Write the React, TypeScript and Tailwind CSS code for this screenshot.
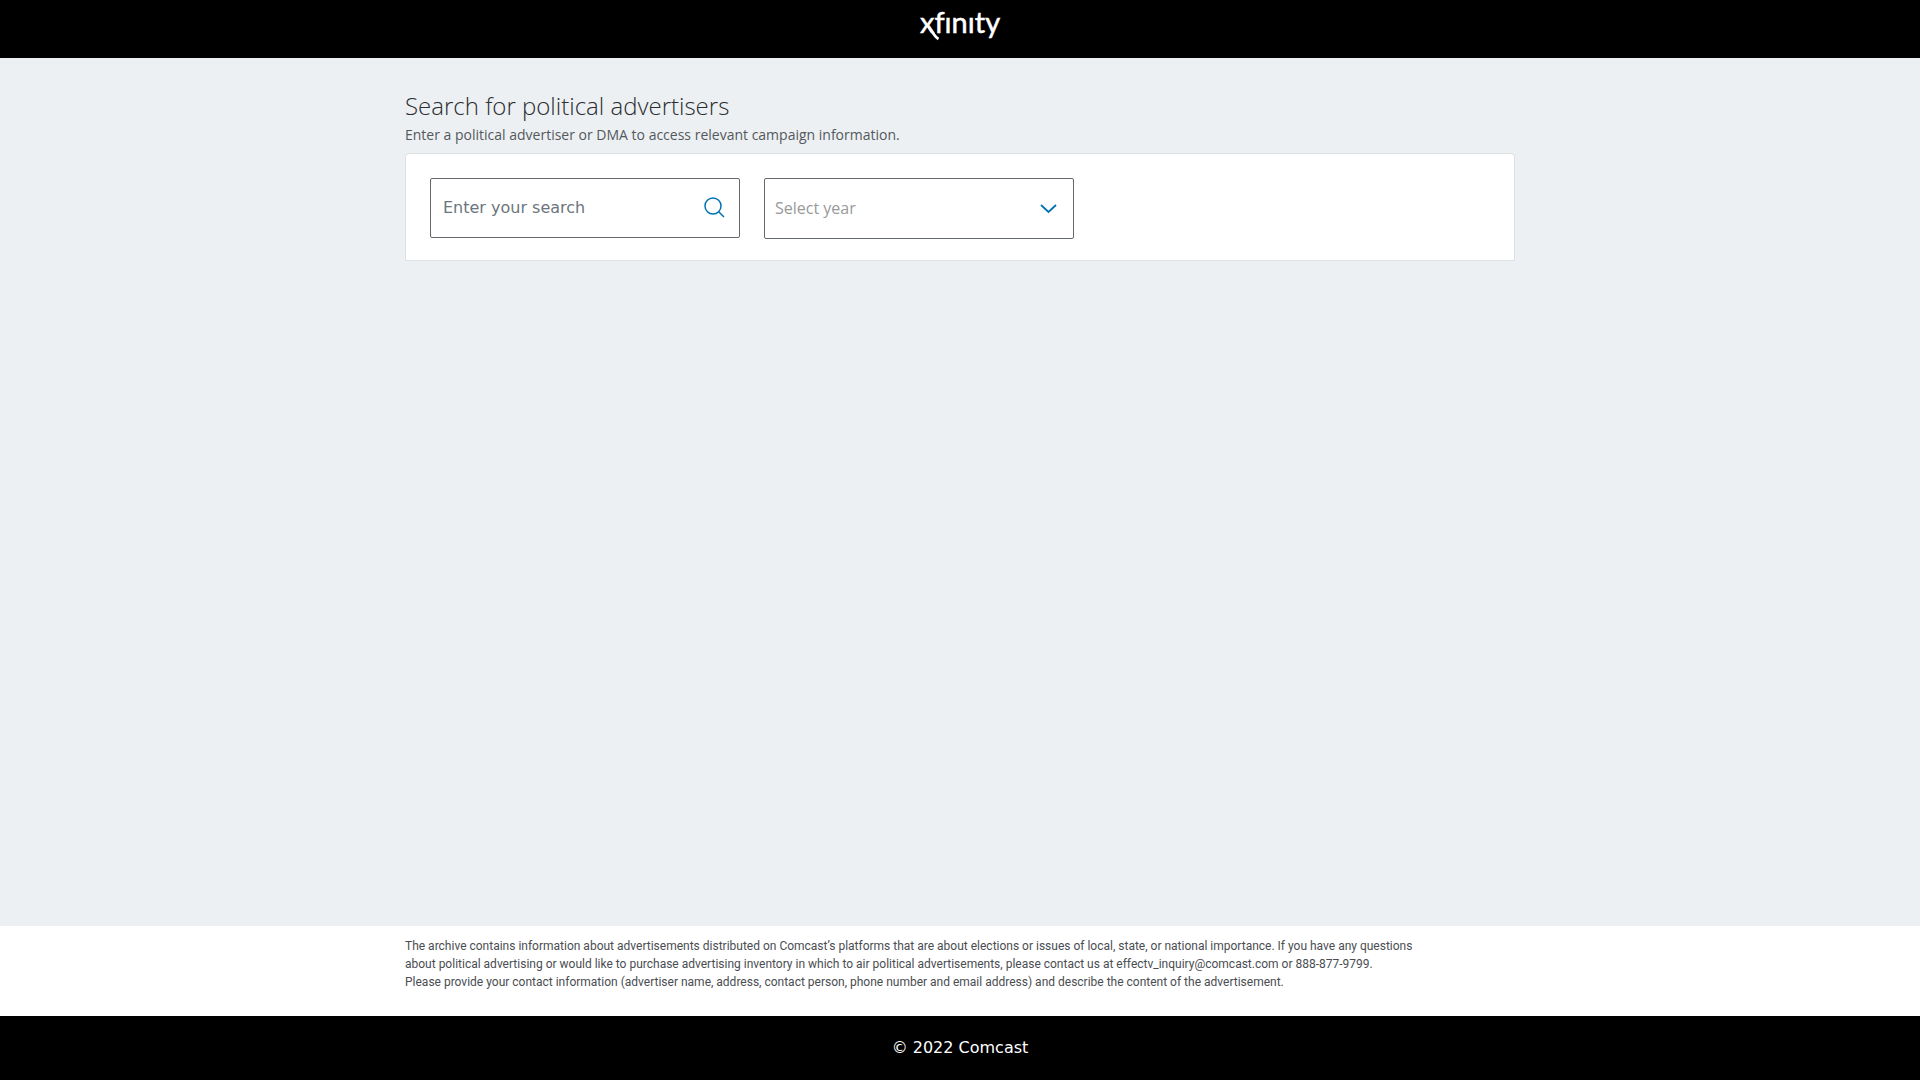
import { useState } from "react";

function Logo() {
  return (
    <svg width="84" height="40" viewBox="0 0 84 40" role="img" aria-label="xfinity">
      <text
        x="2"
        y="29"
        fill="#fff"
        stroke="#fff"
        strokeWidth="0.5"
        fontSize="29"
        fontFamily="Lato, sans-serif"
        className="[font-variant-ligatures:none]"
      >
        xfınıty
      </text>
      <path d="M10.5 22.5 L16 30.5 Q18.2 33.8 20.5 35" stroke="#fff" strokeWidth="2.8" fill="none" />
    </svg>
  );
}

function SearchIcon() {
  return (
    <svg width="24" height="24" viewBox="0 0 24 24" fill="none" stroke="#0272b6" strokeWidth="1.5" aria-hidden="true">
      <circle cx="10" cy="10" r="8" />
      <path d="M15.5 15.5 L21 21" />
    </svg>
  );
}

function ChevronIcon() {
  return (
    <svg width="18" height="12" viewBox="0 0 18 12" fill="none" stroke="#0272b6" strokeWidth="1.8" aria-hidden="true">
      <path d="M2 2 L9.5 9 L17 2" />
    </svg>
  );
}

export default function App() {
  const [query, setQuery] = useState("");
  const [year, setYear] = useState("");

  return (
    <div className="flex min-h-screen flex-col bg-[#ecf0f3] font-['Open_Sans',sans-serif]">
      <header className="flex h-[58px] justify-center bg-black pt-1">
        <a href="#" className="block h-10">
          <Logo />
        </a>
      </header>

      <main className="mx-auto w-full max-w-[1110px] grow pt-8">
        <h1 className="text-[24px] leading-[32px] font-light text-[#2b2d30]">Search for political advertisers</h1>
        <p className="mt-1 text-[14px] leading-[18px] text-[#54585d]">
          Enter a political advertiser or DMA to access relevant campaign information.
        </p>
        <form
          className="mt-[9px] flex items-start gap-6 rounded-t-sm border border-[#dce1e4] bg-white px-6 pt-6 pb-[21px]"
          onSubmit={(e) => e.preventDefault()}
        >
          <div className="flex h-[60px] w-[310px] items-center rounded-xs border border-[#646a70] pr-3">
            <input
              type="text"
              aria-label="Enter your search"
              placeholder="Enter your search"
              value={query}
              onChange={(e) => setQuery(e.target.value)}
              className="h-full min-w-0 grow pb-px pl-3 font-['DejaVu_Sans',sans-serif] text-[16px] text-[#2b2d30] outline-none placeholder:text-[#6c757d]"
            />
            <button type="submit" aria-label="Search">
              <SearchIcon />
            </button>
          </div>
          <div className="grid h-[61px] w-[310px] items-center rounded-xs border border-[#646a70]">
            <select
              aria-label="Select year"
              value={year}
              onChange={(e) => setYear(e.target.value)}
              className="col-start-1 row-start-1 h-full w-full appearance-none bg-transparent pb-0.5 pl-[10px] text-[16px] text-[#999999] outline-none"
            >
              <option value="">Select year</option>
              <option value="2022">2022</option>
              <option value="2021">2021</option>
            </select>
            <span className="pointer-events-none col-start-1 row-start-1 mr-4 justify-self-end">
              <ChevronIcon />
            </span>
          </div>
        </form>
      </main>

      <section className="bg-white">
        <p className="mx-auto w-full max-w-[1110px] pt-[11px] pb-[25px] font-[Roboto,sans-serif] text-[12px] leading-[18px] text-[#4a4d52]">
          The archive contains information about advertisements distributed on Comcast’s platforms that are about
          elections or issues of local, state, or national importance. If you have any questions
          <br />
          about political advertising or would like to purchase advertising inventory in which to air political
          advertisements, please contact us at effectv_inquiry@comcast.com or 888-877-9799.
          <br />
          Please provide your contact information (advertiser name, address, contact person, phone number and email
          address) and describe the content of the advertisement.
        </p>
      </section>

      <footer className="flex h-16 items-center justify-center bg-black font-['DejaVu_Sans',sans-serif] text-[16px] text-white">
        © 2022 Comcast
      </footer>
    </div>
  );
}
